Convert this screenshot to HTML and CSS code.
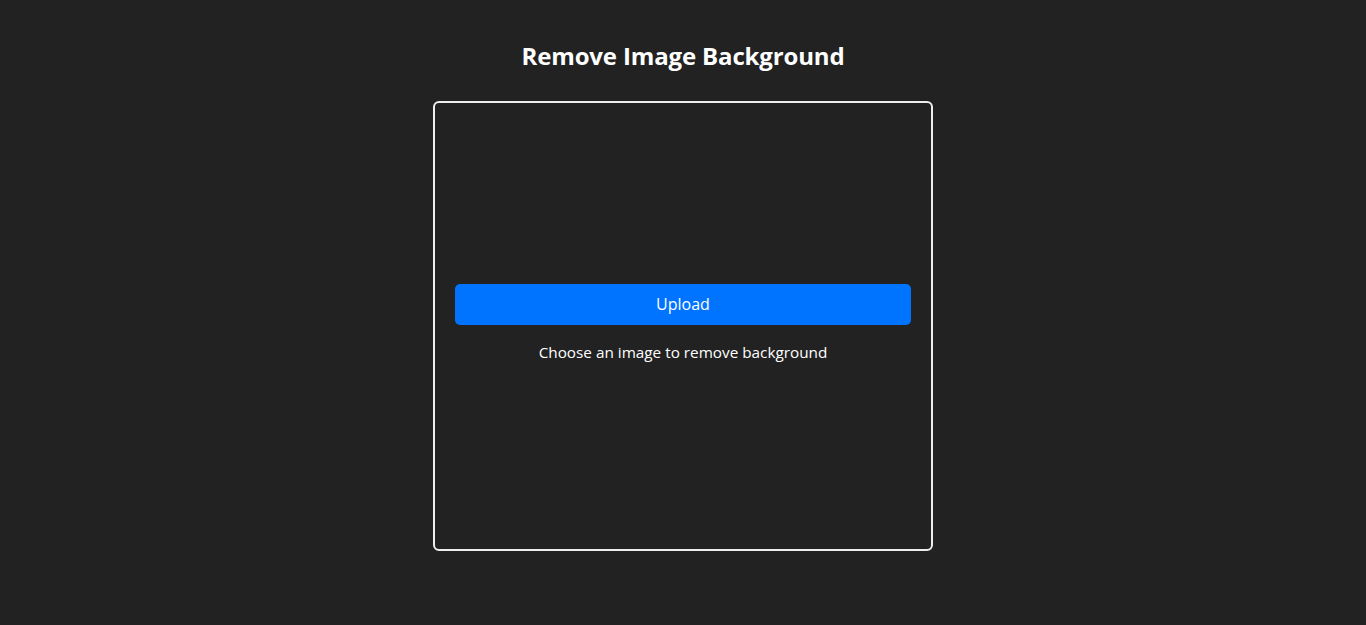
FILE: index.html
```html
<!DOCTYPE html>
<html lang="en">
<head>
<meta charset="utf-8">
<title>Remove Image Background</title>
<link rel="stylesheet" href="styles.css">
</head>
<body>
  <main class="app">
    <h1 class="title">Remove Image Background</h1>
    <section class="dropzone">
      <button class="upload-btn" type="button">Upload</button>
      <p class="hint">Choose an image to remove background</p>
    </section>
  </main>
</body>
</html>
```
FILE: styles.css
```css
html, body {
  margin: 0;
  padding: 0;
  background: #222222;
  color: #ffffff;
  font-family: "Open Sans", "Noto Sans", "Liberation Sans", sans-serif;
}

.app {
  display: flex;
  flex-direction: column;
  align-items: center;
  padding-top: 38px;
}

.title {
  margin: 0;
  font-size: 24px;
  line-height: 36px;
  font-weight: 700;
  letter-spacing: -0.15px;
}

.dropzone {
  box-sizing: border-box;
  margin-top: 27px;
  width: 500px;
  height: 450px;
  border: 2px solid #eeeeee;
  border-radius: 6px;
  padding: 0 20px;
  display: flex;
  flex-direction: column;
  justify-content: center;
  align-items: stretch;
}

.upload-btn {
  height: 41px;
  border: none;
  border-radius: 5px;
  background: #0074ff;
  color: #ffffff;
  font-family: inherit;
  font-size: 16px;
  cursor: pointer;
}

.hint {
  margin: 16px 0 6px;
  text-align: center;
  font-size: 15.3px;
  line-height: 22px;
}
```
